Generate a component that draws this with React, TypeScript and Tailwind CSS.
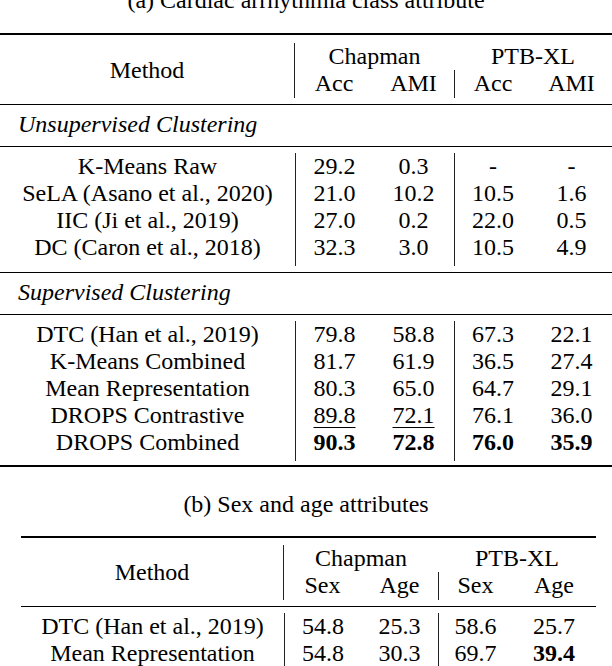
type Cell = { v: string; b?: boolean; u?: boolean };

const colsA = [
  'w-[295px]',
  'w-[78px] border-l border-[#222]',
  'w-[81px]',
  'w-[77px] border-l border-[#222]',
  'w-[81px]',
];

const colsB = [
  'w-[263px]',
  'w-[77px] border-l border-[#222]',
  'w-[77px]',
  'w-[74px] border-l border-[#222]',
  'w-[84px]',
];

const c = (v: string, extra: Partial<Cell> = {}): Cell => ({ v, ...extra });

const unsupervised: Cell[][] = [
  [c('K-Means Raw'), c('29.2'), c('0.3'), c('-'), c('-')],
  [c('SeLA (Asano et al., 2020)'), c('21.0'), c('10.2'), c('10.5'), c('1.6')],
  [c('IIC (Ji et al., 2019)'), c('27.0'), c('0.2'), c('22.0'), c('0.5')],
  [c('DC (Caron et al., 2018)'), c('32.3'), c('3.0'), c('10.5'), c('4.9')],
];

const supervised: Cell[][] = [
  [c('DTC (Han et al., 2019)'), c('79.8'), c('58.8'), c('67.3'), c('22.1')],
  [c('K-Means Combined'), c('81.7'), c('61.9'), c('36.5'), c('27.4')],
  [c('Mean Representation'), c('80.3'), c('65.0'), c('64.7'), c('29.1')],
  [c('DROPS Contrastive'), c('89.8', { u: true }), c('72.1', { u: true }), c('76.1'), c('36.0')],
  [
    c('DROPS Combined'),
    c('90.3', { b: true }),
    c('72.8', { b: true }),
    c('76.0', { b: true }),
    c('35.9', { b: true }),
  ],
];

const attributes: Cell[][] = [
  [c('DTC (Han et al., 2019)'), c('54.8'), c('25.3'), c('58.6'), c('25.7')],
  [c('Mean Representation'), c('54.8'), c('30.3'), c('69.7'), c('39.4', { b: true })],
];

const ThickRule = () => <div className="h-[2px] bg-black" />;
const ThinRule = () => <div className="h-px bg-black" />;

const DataBlock = ({ cols, rows, bottomGap }: { cols: string[]; rows: Cell[][]; bottomGap: string }) => (
  <div className={`mt-[6px] flex ${bottomGap}`}>
    {cols.map((col, ci) => (
      <div key={ci} className={`${col} pb-[5px] flex flex-col items-center`}>
        {rows.map((row, ri) => {
          const cell = row[ci];
          return (
            <div
              key={ri}
              className={`h-[27px] whitespace-nowrap ${cell.b ? 'font-bold' : ''} ${
                cell.u ? 'underline decoration-1 underline-offset-[4px]' : ''
              }`}
            >
              {cell.v}
            </div>
          );
        })}
      </div>
    ))}
  </div>
);

const Header = ({ cols, sub }: { cols: string[]; sub: [string, string] }) => (
  <div className="flex">
    <div className={`${cols[0]} flex items-center justify-center`}>Method</div>
    <div className="flex flex-col border-l border-[#222]">
      <div className="h-[27px] text-center">Chapman</div>
      <div className="flex">
        <div className={`${cols[1].replace(' border-l border-[#222]', '')} h-[28px] text-center`}>{sub[0]}</div>
        <div className={`${cols[2]} text-center`}>{sub[1]}</div>
      </div>
    </div>
    <div className="flex flex-col">
      <div className="h-[27px] text-center">PTB-XL</div>
      <div className="flex">
        <div className={`${cols[3]} h-[28px] pb-px text-center`}>{sub[0]}</div>
        <div className={`${cols[4]} text-center`}>{sub[1]}</div>
      </div>
    </div>
  </div>
);

const GroupLabel = ({ children }: { children: string }) => (
  <div className="mt-[6px] mb-[8px] h-[27px] pl-[18px] italic">{children}</div>
);

export default function App() {
  return (
    <div className="h-[666px] w-[612px] overflow-hidden bg-white text-[24px] leading-[27px] text-black font-['Liberation_Serif','Times_New_Roman',serif]">
      {/* (a) */}
      <div className="-mt-[13px] h-[27px] text-center">(a) Cardiac arrhythmia class attribute</div>
      <div className="mt-[19px]">
        <ThickRule />
        <div className="mt-[8px] mb-[6px]">
          <Header cols={colsA} sub={['Acc', 'AMI']} />
        </div>
        <ThinRule />
        <GroupLabel>Unsupervised Clustering</GroupLabel>
        <ThinRule />
        <DataBlock cols={colsA} rows={unsupervised} bottomGap="mb-[6px]" />
        <ThinRule />
        <GroupLabel>Supervised Clustering</GroupLabel>
        <ThinRule />
        <DataBlock cols={colsA} rows={supervised} bottomGap="mb-[4px]" />
        <ThickRule />
      </div>

      {/* (b) */}
      <div className="mt-[24px] h-[27px] text-center">(b) Sex and age attributes</div>
      <div className="mt-[18px] ml-[21px] w-[575px]">
        <ThickRule />
        <div className="mt-[7px] mb-[6px]">
          <Header cols={colsB} sub={['Sex', 'Age']} />
        </div>
        <ThinRule />
        <DataBlock cols={colsB} rows={attributes} bottomGap="mb-[4px]" />
      </div>
    </div>
  );
}
